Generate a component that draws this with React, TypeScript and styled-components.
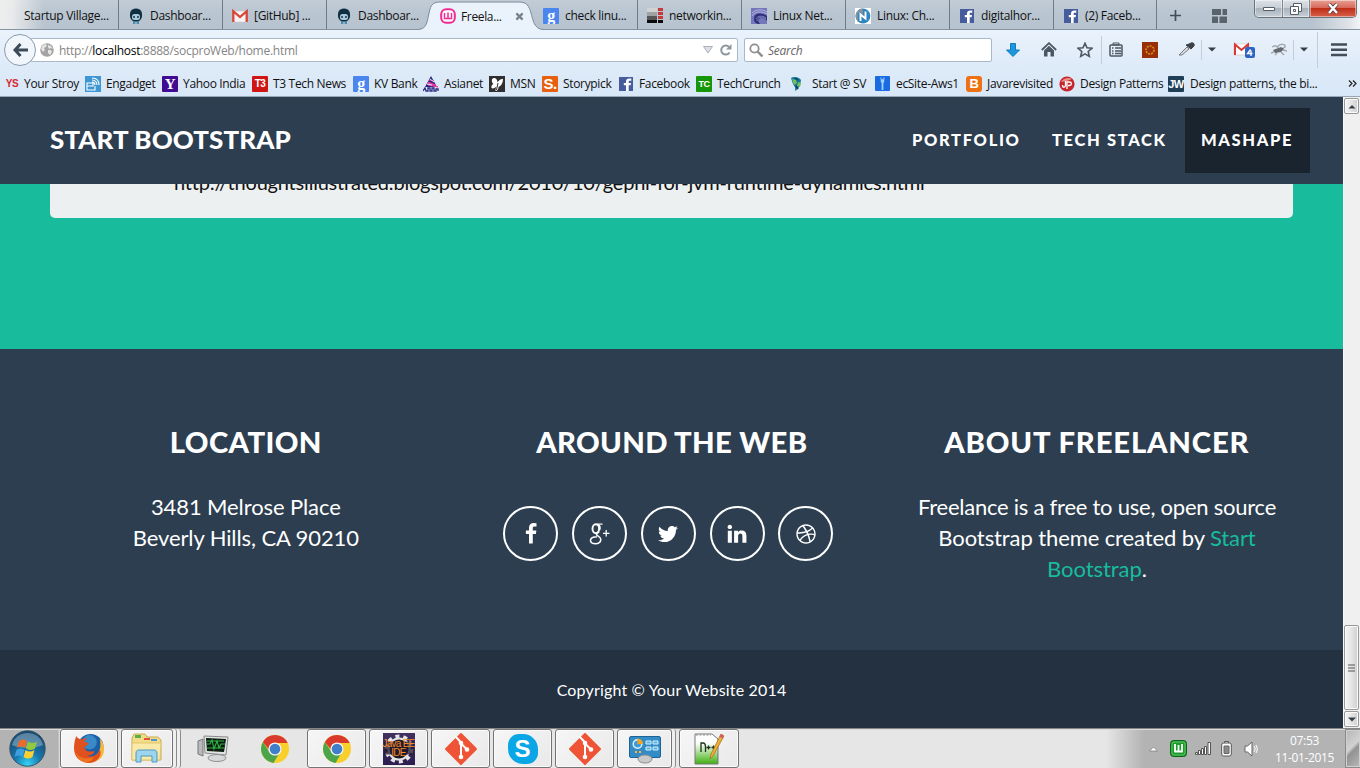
import React from "react";
import styled, { createGlobalStyle, css } from "styled-components";
import { FaTwitter, FaDribbble } from "react-icons/fa";

const ui = `"Segoe UI", "Open Sans", sans-serif`;

const GlobalStyle = createGlobalStyle`
  * { box-sizing: border-box; }
  body { margin: 0; overflow: hidden; background: #2c3e50; }
  svg { display: block; flex: none; }
`;

const Screen = styled.div`
  width: 1360px;
  height: 768px;
  display: flex;
  flex-direction: column;
  overflow: hidden;
  font-family: ${ui};
  font-size: 12px;
  color: #111;
  white-space: nowrap;
`;

/* ---------- tab strip ---------- */

const TabStrip = styled.div`
  height: 30px;
  flex: none;
  display: flex;
  align-items: stretch;
  border-bottom: 1px solid #8693a0;
  background:
    linear-gradient(90deg, #eeeeee 0, rgba(238, 238, 238, 0.9) 12px, rgba(238, 238, 238, 0) 44px),
    linear-gradient(270deg, #f2f4f6 0, rgba(238, 240, 242, 0.7) 12px, rgba(238, 238, 238, 0) 46px),
    linear-gradient(#c1ccd6, #b9c5d0 45%, #b7c3ce);
`;

const Tab = styled.div<{ $w: number; $line?: boolean }>`
  width: ${(p) => p.$w}px;
  padding: 2px 0 0 9px;
  display: flex;
  align-items: center;
  gap: 6px;
  flex: none;
  letter-spacing: -0.3px;
  ${(p) =>
    p.$line !== false &&
    css`
      background: linear-gradient(90deg, rgba(255, 255, 255, 0) 0, rgba(255, 255, 255, 0) calc(100% - 1px), #6f7c88 calc(100% - 1px));
    `}
`;

const ActiveTab = styled.div`
  width: 125px;
  margin: 0 -9px 0 -13px;
  height: 30px;
  flex: none;
  position: relative;
  z-index: 1;
  display: flex;
  align-items: center;
  padding: 2px 0 0 22px;
  gap: 5px;
  letter-spacing: -0.35px;
  > svg:first-child {
    position: absolute;
    left: 0;
    top: 0;
  }
  > * { position: relative; }
`;

const TabLabel = styled.span<{ $w?: number }>`
  width: ${(p) => (p.$w ? `${p.$w}px` : "auto")};
`;

const StripTools = styled.div`
  display: flex;
  align-items: center;
  gap: 31px;
  padding: 2px 0 0 13px;
  width: 97px;
`;

const WindowButtons = styled.div`
  display: flex;
  height: 18px;
  width: 103px;
  border: 1px solid #68737d;
  border-top: 0;
  border-radius: 0 0 5px 5px;
  overflow: hidden;
  background: linear-gradient(#dce2e8, #c6cdd4 48%, #a9b3bc 50%, #c8d0d7);
`;

const WindowButton = styled.div<{ $w: number; $close?: boolean }>`
  width: ${(p) => p.$w}px;
  display: flex;
  align-items: center;
  justify-content: center;
  border-right: ${(p) => (p.$close ? "0" : "1px solid #7d8790")};
  box-shadow: inset 0 0 0 1px rgba(255, 255, 255, 0.45);
  background: ${(p) => (p.$close ? "linear-gradient(#e9a093, #d7695a 46%, #c02e17 50%, #d8614a)" : "transparent")};
`;

/* ---------- address toolbar ---------- */

const Chrome = styled.div`
  height: 67px;
  flex: none;
  background: linear-gradient(#eaf3fc, #dfebf8 50%, #d8e7f7);
  border-bottom: 1px solid #98a6b5;
`;

const Toolbar = styled.div`
  height: 39px;
  display: flex;
  align-items: center;
  padding-left: 4px;
`;

const BackButton = styled.div`
  width: 32px;
  height: 32px;
  border-radius: 50%;
  border: 1px solid #8b9bad;
  background: #f1f6fc;
  display: flex;
  align-items: center;
  justify-content: center;
  z-index: 1;
  flex: none;
`;

const Field = styled.div<{ $w: number; $url?: boolean }>`
  width: ${(p) => p.$w}px;
  height: 24px;
  margin-left: ${(p) => (p.$url ? -6 : 6)}px;
  padding-left: ${(p) => (p.$url ? 9 : 4)}px;
  border: 1px solid #a9b9cc;
  border-radius: 2px;
  background: #fff;
  display: flex;
  align-items: center;
  flex: none;
`;

const Url = styled.div`
  flex: 1;
  padding: 2px 0 0 5px;
  color: #858585;
  letter-spacing: -0.27px;
  b { font-weight: 400; color: #000; }
`;

const SearchHint = styled.div`
  font-style: italic;
  color: #666;
  padding: 2px 0 0 5px;
  letter-spacing: -0.25px;
`;

const Tool = styled.div<{ $w: number }>`
  width: ${(p) => p.$w}px;
  height: 28px;
  display: flex;
  align-items: center;
  justify-content: center;
  flex: none;
`;

const Divider = styled.div<{ $h?: number }>`
  width: 1px;
  height: ${(p) => p.$h ?? 20}px;
  background: #c2cdd9;
  flex: none;
`;

const Bookmarks = styled.div`
  height: 28px;
  display: flex;
  align-items: center;
  padding: 1px 0 0 4px;
`;

const Bookmark = styled.div<{ $w: number; $gap?: number }>`
  width: ${(p) => p.$w}px;
  flex: none;
  display: flex;
  align-items: center;
  gap: ${(p) => p.$gap ?? 5}px;
  letter-spacing: -0.33px;
`;

const Favicon = styled.span<{ $bg?: string; $fg?: string; $size?: number; $serif?: boolean; $r?: number }>`
  width: 16px;
  height: 16px;
  flex: none;
  display: flex;
  align-items: center;
  justify-content: center;
  overflow: hidden;
  border-radius: ${(p) => p.$r ?? 1}px;
  background: ${(p) => p.$bg ?? "transparent"};
  color: ${(p) => p.$fg ?? "#fff"};
  font: bold ${(p) => p.$size ?? 12}px/16px ${(p) => (p.$serif ? `"Liberation Serif", serif` : `"Liberation Sans", sans-serif`)};
  letter-spacing: -0.5px;
`;

/* ---------- web page ---------- */

const Viewport = styled.div`
  height: 631px;
  flex: none;
  display: flex;
`;

const Page = styled.div`
  width: 1343px;
  display: flex;
  flex-direction: column;
  font-family: Lato, sans-serif;
  color: #fff;
`;

const SiteNav = styled.nav`
  height: 87px;
  flex: none;
  background: #2c3e50;
  padding: 0 33px 0 50px;
  display: flex;
  align-items: center;
  font-weight: 900;
  z-index: 1;
`;

const Brand = styled.div`
  flex: 1;
  font-size: 25px;
  letter-spacing: 0.1px;
  padding-bottom: 4px;
  transform: scaleX(1.037);
  transform-origin: left;
`;

const NavLink = styled.div<{ $w: number; $active?: boolean }>`
  width: ${(p) => p.$w}px;
  height: 65px;
  padding: 0 0 1px 16px;
  display: flex;
  align-items: center;
  font-size: 16.5px;
  letter-spacing: 1.65px;
  background: ${(p) => (p.$active ? "#1a242f" : "transparent")};
`;

const GreenSection = styled.section`
  height: 165px;
  flex: none;
  background: #18bc9c;
  padding: 0 50px;
`;

const Panel = styled.div`
  height: 34px;
  overflow: hidden;
  background: #ecf0f1;
  border-radius: 0 0 5px 5px;
  color: #111;
  padding-left: 124px;
  font-size: 20px;
  line-height: 28px;
  letter-spacing: -0.2px;
  > div { margin-top: -16px; }
`;

const Footer = styled.footer`
  height: 301px;
  flex: none;
  background: #2c3e50;
  display: flex;
  padding: 77px 33px 0;
  text-align: center;
`;

const FooterCol = styled.div`
  width: 425.6px;
  flex: none;
  font-size: 22px;
  line-height: 31px;
`;

const FooterLine = styled.div<{ $track: number }>`
  letter-spacing: ${(p) => p.$track}px;
`;

const FooterTitle = styled.h3<{ $track: number }>`
  margin: 0 0 33px;
  font-size: 28px;
  line-height: 32px;
  font-weight: 900;
  letter-spacing: ${(p) => p.$track}px;
  transform: scaleX(1.045);
`;

const Accent = styled.span`
  color: #18bc9c;
`;

const Socials = styled.div`
  display: flex;
  justify-content: center;
  gap: 13.8px;
  padding: 15px 6px 0 0;
`;

const Social = styled.div`
  width: 55px;
  height: 55px;
  border: 2px solid #fff;
  border-radius: 50%;
  display: flex;
  align-items: center;
  justify-content: center;
`;

const Copyright = styled.div`
  height: 78px;
  background: #233140;
  text-align: center;
  font-size: 16px;
  line-height: 80px;
  letter-spacing: 0.17px;
`;

const Scrollbar = styled.div`
  width: 17px;
  background: #f0f0f0;
  border-left: 1px solid #fafafa;
  display: flex;
  flex-direction: column;
  padding: 1px 1px 1px 0;
`;

const ScrollButton = styled.div<{ $h?: number; $mb?: number }>`
  height: ${(p) => p.$h ?? 16}px;
  flex: none;
  margin-bottom: ${(p) => p.$mb ?? 0}px;
  border: 1px solid #989898;
  border-radius: 2px;
  background: linear-gradient(90deg, #f6f6f6, #e4e4e4 50%, #cfcfcf);
  box-shadow: inset 0 0 0 1px #fafafa;
  display: flex;
  align-items: center;
  justify-content: center;
`;

/* ---------- taskbar ---------- */

const Taskbar = styled.div`
  height: 40px;
  flex: none;
  border-top: 1px solid #85868a;
  background: linear-gradient(90deg, #b3b3b3 0, #b3b3b3 58px, #e6e6e6 60px, #e6e6e6 1106px, #b3b3b3 1144px);
  box-shadow: inset 0 1px 0 #dcdcdc;
  display: flex;
  align-items: stretch;
`;

const TaskItem = styled.div<{ $w: number; $gap?: number; $button?: boolean }>`
  width: ${(p) => p.$w}px;
  margin: 0 ${(p) => p.$gap ?? 3}px 0 0;
  flex: none;
  display: flex;
  align-items: center;
  justify-content: center;
  ${(p) =>
    p.$button &&
    css`
      border: 1px solid #737373;
      border-radius: 3px;
      background: linear-gradient(135deg, #f6f6f6, #e9e9e9);
      box-shadow: inset 0 0 0 1px #fbfbfb;
    `}
`;

const StackEdge = styled.div<{ $gap?: number }>`
  width: 4px;
  margin-right: ${(p) => p.$gap ?? 0}px;
  border-right: 1px solid #8a8a8a;
  border-radius: 0 3px 3px 0;
  background: #efefef;
  flex: none;
`;

const Tray = styled.div`
  margin-left: auto;
  display: flex;
  align-items: center;
`;

const TrayIcon = styled.div<{ $w: number }>`
  width: ${(p) => p.$w}px;
  display: flex;
  justify-content: center;
`;

const Clock = styled.div`
  width: 81px;
  text-align: center;
  color: #fff;
  line-height: 17px;
  letter-spacing: -0.35px;
`;

const ShowDesktop = styled.div`
  width: 15px;
  height: 39px;
  border: 1px solid #8a8a8a;
  border-right: 0;
  background: linear-gradient(135deg, #b5b5b5, #d2d2d2 45%, #929292 55%, #b8b8b8);
  box-shadow: inset 0 0 0 1px #d0d0d0;
`;

/* ---------- small drawings ---------- */

const Octocat = () => (
  <svg width="16" height="16" viewBox="0 0 16 16">
    <path d="M5 11h6v5H5z" fill="#7fb4d2" />
    <rect x="2" y="0.500" width="12" height="13" rx="5.500" fill="#10303f" />
    <rect x="4" y="6" width="8" height="6" rx="2.500" fill="#a9c9dc" />
    <path d="M6 8v2M10 8v2" stroke="#10303f" strokeWidth="1.400" />
    <path d="M6 13v3M10 13v3" stroke="#2f6482" />
  </svg>
);

const Gmail = () => (
  <svg width="16" height="16" viewBox="0 0 16 16">
    <path d="M1 3h14v11H1z" fill="#f7f3f2" stroke="#cfc4c2" strokeWidth=".5" />
    <path d="M1.300 14V3.200L8 9l6.700-5.800V14" fill="none" stroke="#d8463a" strokeWidth="2.300" />
  </svg>
);

const Wamp = () => (
  <svg width="16" height="16" viewBox="0 0 16 16">
    <rect x="1.200" y="1.200" width="13.600" height="13.600" rx="5" fill="#fff" stroke="#ee2a93" strokeWidth="2" />
    <path d="M4.500 5v5.500h7V5M8 4.500v5.500" fill="none" stroke="#ee2a93" strokeWidth="1.500" />
  </svg>
);

const BlockBars = () => (
  <svg width="16" height="16" viewBox="0 0 16 16">
    <path d="M0 0h10v4H0z" fill="#d0d2d3" />
    <path d="M0 4h10v4H0z" fill="#a1a1a1" />
    <path d="M0 8h10v4H0z" fill="#555" />
    <path d="M0 12h10v3H0zM11 12h5v3h-5z" fill="#0b0b0b" />
    <path d="M11 0h5v3h-5zM11 4h5v3h-5zM11 8h5v3h-5z" fill="#c8373c" />
  </svg>
);

const Swirl = () => (
  <svg width="16" height="16" viewBox="0 0 16 16">
    <path d="M0 0h16v16H0z" fill="#7577bd" />
    <path d="M1 5c4-4 11-4 15-1M1 8C4 3 11 3 16 6" fill="none" stroke="#b4b6e0" />
    <path d="M3 11c0-6 7-7 13-3v5c-2-3-6-4-8-2s0 3 1 5C5 16 3 14 3 11z" fill="#2c3179" />
    <path d="M6 13c0-4 5-5 9-2M5 11c1-3 6-4 10-1" fill="none" stroke="#8d90cc" strokeWidth=".8" />
  </svg>
);

const NBadge = () => (
  <svg width="16" height="16" viewBox="0 0 16 16">
    <path d="M0 0h16v16H0z" fill="#fff" />
    <circle cx="8" cy="8" r="7.400" fill="#2f86bf" />
    <path d="M8 .6A7.400 7.400 0 003 13.500V5l5 2z" fill="#7f929e" />
    <path d="M5.500 13V6.500l5 4V3.500" fill="none" stroke="#fff" strokeWidth="1.900" />
  </svg>
);

const Engadget = () => (
  <svg width="16" height="16" viewBox="0 0 16 16">
    <path d="M0 0h16v16H0z" fill="#3d97d3" />
    <path d="M2 7h6v3H2zM2 10v4h8v-4M7 6c2 0 3 1 3 3M7 4c3 0 5 2 5 5M7 2c5 0 7 3 7 7" fill="none" stroke="#fff" strokeWidth="1.100" />
  </svg>
);

const Asianet = () => (
  <svg width="16" height="16" viewBox="0 0 16 16">
    <path d="M8 0l6 11H2z" fill="#272780" />
    <path d="M5 6l8 3H9l6 2-10-2zM6 4l5 1" fill="#e73a9d" stroke="#e73a9d" />
    <path d="M4 8l5 1M7 3l4 3" stroke="#dde9f6" />
    <path d="M0 15l2-3 1 3h2v-3h2v3h2v-3h2v3h2v-2h2v2" fill="none" stroke="#2c2c80" strokeWidth="1.300" />
  </svg>
);

const Butterfly = () => (
  <svg width="16" height="16" viewBox="0 0 16 16">
    <path d="M0 0h16v16H0z" fill="#303030" />
    <path d="M5 2c2.500 0 3.500 2.500 3.500 4.500C10 4 12 2.500 14 3c0 4-1.500 6.500-4.500 8 0 2-1 4-3 4 0-2 .3-3 1-4.500C6 12 4 13 2.500 12 2 10 3 8.500 4.500 8 2 6 2.500 2 5 2z" fill="#fff" />
    <path d="M7.500 14L9 7" stroke="#303030" />
  </svg>
);

const Globule = () => (
  <svg width="16" height="16" viewBox="0 0 16 16">
    <path d="M2 2c3-2 8-1 10 2l-1 5c-1 3-3 5-5 6 1-4-1-5-2-7z" fill="#10759c" />
    <path d="M3 3l4 1 1 3-3 2zM9 6l3 1-1 4-3-1z" fill="#78c05a" />
    <path d="M6 2l3 2M7 10l2 3" stroke="#073f66" strokeWidth="1.500" />
  </svg>
);

const Figure = () => (
  <svg width="16" height="16" viewBox="0 0 16 16">
    <rect width="15" height="15" rx="1" fill="#1b6be0" />
    <path d="M6 1.500v2.200M9 1.500v2.200" stroke="#9cd2ff" />
    <circle cx="7.500" cy="5" r="1.900" fill="#9cd2ff" />
    <path d="M7.500 6v8" stroke="#9cd2ff" fill="none" strokeWidth="1.800" />
  </svg>
);

const RedBall = () => (
  <svg width="16" height="16" viewBox="0 0 16 16">
    <circle cx="8" cy="8" r="7.600" fill="#c6262c" />
    <path d="M2 6c2-4 8-5 11-3L8 5z" fill="#ea8f8c" />
    <path d="M3.500 9c0 3 3 3 3 0V5M8 13V6h2.500c2.500 0 2.500 3.500 0 3.500H9" fill="none" stroke="#fff" strokeWidth="1.300" />
  </svg>
);

const Globe = () => (
  <svg width="14" height="14" viewBox="0 0 14 14">
    <circle cx="7" cy="7" r="6.800" fill="#a3a3a3" />
    <path d="M2 3l3-2 2 1-1 2-2 1 1 2-2 2-2-3zM8 2l3 1 2 3-2-1-2 1-1-2zM8 7l3 0 1 2-2 3-2-2z" fill="#e4e4e4" />
  </svg>
);

const FirefoxLogo = () => (
  <svg width="31" height="31" viewBox="0 0 30 30">
    <circle cx="16" cy="13.500" r="12.500" fill="#1c5fa8" />
    <circle cx="15" cy="9" r="7" fill="#4fa7dd" opacity=".6" />
    <path d="M25 5c6 7 5 17-1 21-7 5-16 3-20-3 6 3 14 3 18-2 4-4 4-10 3-16z" fill="#f6b83a" />
    <path d="M2 3c1 2 3 3 5 3 2-1 4-1 6-1-2 1-3 2-3 4 2 0 4 0 4 1 0 2-3 2-4 4 1 2 2 4 5 4 2 0 3-1 5 0-1 3-5 4-7 4 5 2 10-1 12-6 3 6-3 13-10 13C7 29 0 24 0 15 0 10 1 7 2 3z" fill="#e2501d" />
    <path d="M1 17c3 8 11 9 18 6-1 4-5 6-9 5-5-1-8-6-9-11z" fill="#ee7420" />
  </svg>
);

const Folder = () => (
  <svg width="34" height="32" viewBox="0 0 34 32">
    <path d="M2 27V5l2-4h11l2 3h11l3 3v20z" fill="#f3dc86" stroke="#c9a94e" />
    <path d="M5 2h6v3H5z" fill="#58b04b" />
    <path d="M14 5h6v2h-6z" fill="#e0523c" />
    <path d="M21 6h6v2h-6z" fill="#4d96d1" />
    <path d="M2 10h29l-1 17H2z" fill="#f9eaa9" stroke="#dfc56c" />
    <path d="M6 29V20c0-2 1-3 3-3h15c2 0 3 1 3 3v9h-5v-6H11v6z" fill="#9ed4ee" stroke="#4d99bf" />
  </svg>
);

const Monitor = () => (
  <svg width="32" height="28" viewBox="0 0 32 28">
    <path d="M1 6l5-2v17l-5-2z" fill="#b7b9ba" stroke="#77797a" />
    <path d="M7 1l24 1-2 18-21-2z" fill="#e2e2e2" stroke="#888" />
    <path d="M9 3l20 1-2 13-17-1z" fill="#0c1c10" />
    <path d="M10 9h3l2-4 2 9 3-8 2 7 2-4h4M10 6h17M10 13h17" fill="none" stroke="#30b545" strokeWidth="1.100" />
    <ellipse cx="20" cy="23" rx="9" ry="3.500" fill="#d5d7d9" stroke="#8d8f91" />
  </svg>
);

const ChromeLogo = () => (
  <svg width="30" height="30" viewBox="0 0 30 30">
    <circle cx="15" cy="15" r="14" fill="#f8cf2b" />
    <path d="M2.900 8A14 14 0 0127.700 9H15l-6 6.500z" fill="#d93a2c" />
    <path d="M2.900 8A14 14 0 0013.500 28.900L20 18l-10.500 0z" fill="#4ca54a" />
    <circle cx="15" cy="15" r="6.600" fill="#f4f4f4" />
    <circle cx="15" cy="15" r="5.300" fill="#3f7fc9" />
  </svg>
);

const GitLogo = () => (
  <svg width="32" height="32" viewBox="0 0 32 32">
    <path d="M16 1L31 16 16 31 1 16z" fill="#ef5436" stroke="#ef5436" strokeWidth="2" strokeLinejoin="round" />
    <path d="M10.500 3.500l5.500 6v15M16 10.500l6 6" fill="none" stroke="#fff" strokeWidth="2" />
    <circle cx="16" cy="10" r="2.300" fill="#fff" />
    <circle cx="22" cy="16.500" r="2.300" fill="#fff" />
    <circle cx="16" cy="24" r="2.300" fill="#fff" />
  </svg>
);

const SkypeMark = styled.div`
  width: 30px;
  height: 30px;
  border-radius: 11px 15px 11px 15px;
  background: #0aa6e5;
  color: #fff;
  text-align: center;
  font: bold 24px/30px "Liberation Sans", sans-serif;
`;

const JavaMark = styled.div`
  width: 32px;
  height: 32px;
  background: linear-gradient(#41305f, #2c1e50);
  display: grid;
  place-items: center;
  > * { grid-area: 1 / 1; }
`;

const JavaText = styled.div`
  color: #f58a2a;
  font: 10px/8.500px "Liberation Sans", sans-serif;
  text-align: center;
  letter-spacing: -0.75px;
  z-index: 1;
  white-space: pre;
`;

const Gear = () => (
  <svg width="30" height="30" viewBox="0 0 30 30">
    <circle cx="15" cy="15" r="12.500" fill="none" stroke="#e4e4e4" strokeWidth="4" strokeDasharray="4 3.850" />
    <circle cx="15" cy="15" r="10.500" fill="#1c1a1f" stroke="#e4e4e4" strokeWidth="2" />
    <path d="M0 7.500h30v13H0z" fill="#241a30" opacity=".75" />
  </svg>
);

const ControlPanel = () => (
  <svg width="32" height="30" viewBox="0 0 32 30">
    <rect x=".5" y="2.500" width="31" height="21" rx="1.500" fill="#338cc6" stroke="#1e6396" />
    <circle cx="8.500" cy="10" r="4.300" fill="#3e9dd8" stroke="#dff2fc" strokeWidth="1.400" />
    <path d="M8.500 10V4.500a5.500 5.500 0 015.500 5.500z" fill="#f5a223" />
    <path d="M17 7h5v3h-5zM24 7h5v3h-5zM17 13h5v3h-5zM24 13h5v3h-5z" fill="#57b5e3" stroke="#d4f0fb" />
    <path d="M6 18h2M10 18h2" stroke="#ffb63e" strokeWidth="2" />
    <ellipse cx="16" cy="25" rx="7" ry="4" fill="#c7c9ca" stroke="#8b8d8e" />
  </svg>
);

const Notepad = () => (
  <svg width="30" height="32" viewBox="0 0 30 32">
    <defs>
      <linearGradient id="np" x1="0" y1="0" x2="0" y2="1">
        <stop offset=".3" stopColor="#fff" />
        <stop offset="1" stopColor="#3fb010" />
      </linearGradient>
    </defs>
    <path d="M1 1h17l6 5v25H1z" fill="url(#np)" stroke="#77797a" />
    <path d="M2 2h15" stroke="#8d8d8d" strokeDasharray="2 1.500" />
    <path d="M7 19v-9h2c2 0 2.500 1 2.500 4v5M12.500 14.500h4M14.500 12.500v4M17.500 14.500h4M19.500 12.500v4" fill="none" stroke="#19331a" strokeWidth="1.300" />
    <path d="M27 1l3 2-11 20-3 3 1-5z" fill="#eeae36" stroke="#a06d15" strokeWidth=".7" />
    <path d="M27 1l3 2-1.500 2.500-3-2z" fill="#d45a66" />
  </svg>
);

const StartOrb = () => (
  <svg width="37" height="37" viewBox="0 0 37 37">
    <defs>
      <radialGradient id="orb" cx=".5" cy=".95" r=".85">
        <stop offset="0" stopColor="#36d5f7" />
        <stop offset=".45" stopColor="#1876ad" />
        <stop offset="1" stopColor="#17486f" />
      </radialGradient>
    </defs>
    <circle cx="18.500" cy="18.500" r="17.700" fill="url(#orb)" stroke="#345569" />
    <path d="M3 15C5 7 11 3 18.500 3S32 7 34 15c-8 4-23 4-31 0z" fill="#b7d3e2" opacity=".42" />
    <path d="M10 11c3-2 5-2 8 0l-2 7c-3-2-5-2-8 0z" fill="#ec6a2b" />
    <path d="M19 11.500c3 2 6 2 9 0l-2 7c-3 2-6 2-9 0z" fill="#94c93d" />
    <path d="M7.500 20c3-2 5-2 8 0l-2 7c-3-2-5-2-8 0z" fill="#3e9fe0" />
    <path d="M16.500 20c3 2 6 2 9 0l-2 7c-3 2-6 2-9 0z" fill="#fbd034" />
  </svg>
);

const Caret = ({ up = false }: { up?: boolean }) => (
  <svg width="8" height="5" viewBox="0 0 8 5">
    <path d={up ? "M0.500 4.500L4 1l3.500 3.500z" : "M0 .5h8l-4 4z"} fill="#363e45" />
  </svg>
);

const FacebookGlyph = () => (
  <svg width="22" height="22" viewBox="0 0 1792 1792">
    <path fill="#fff" d="M1343 12v264h-157q-86 0-116 36t-30 108v189h293l-39 296h-254v759h-306v-759h-255v-296h255v-218q0-186 104-288.500t277-102.500q147 0 228 12z" />
  </svg>
);

const LinkedinGlyph = () => (
  <svg width="22" height="22" viewBox="0 0 1792 1792">
    <path fill="#fff" d="M477 625v991h-330v-991h330zm21-306q1 73-50.500 122t-135.500 49h-2q-82 0-132-49t-50-122q0-74 51.500-122.500t134.500-48.500 133 48.500 51 122.500zm1166 729v568h-329v-530q0-105-40.500-164.500t-126.500-59.500q-63 0-105.500 34.500t-64.500 85.500q-11 30-11 81v553h-329q2-399 2-647t-1-296l-1-48h329v144h-2q20-32 41-56t56.500-52 87-43.500 114.500-15.500q171 0 275 113.500t104 332.500z" />
  </svg>
);

const GooglePlus = () => (
  <svg width="21" height="22" viewBox="0 0 21 22" fill="none" stroke="#fff">
    <ellipse cx="6.800" cy="5.700" rx="3.300" ry="4.400" strokeWidth="1.900" />
    <path d="M13.500 1.100H7.500" strokeWidth="1.200" />
    <path d="M9.500 1.500c1.500 1.200 1.800 3.500 1.100 5.500" strokeWidth="1.500" />
    <path d="M10 8.500c-.8 1.200-2.600 1.700-2.600 2.800 0 1.800 4.400 2.200 4.400 5.200 0 2.600-2.400 4.200-5.400 4.200-2.900 0-4.900-1.200-4.900-3.300 0-2.500 3-3.500 6.500-3.600" strokeWidth="1.600" />
    <path d="M14 10.300h6.500M17.200 7v6.600" strokeWidth="1.300" />
  </svg>
);

const googleFav = <Favicon $bg="#4a86ee" $serif $size={16}>g</Favicon>;
const fbFav = (
  <Favicon>
    <svg width="14" height="14" viewBox="0 0 14 14">
      <path d="M0 0h14v14H0z" fill="#455d9c" />
      <path d="M7 14V8.300H4.800V6H7V4.500c0-2 1.200-3 3.300-3h2v2.200H11c-1 0-1.300.4-1.300 1.200V6H12l-.4 2.300H9.700V14z" fill="#fff" />
    </svg>
  </Favicon>
);

const tabsBefore = [
  { label: "Dashboar...", icon: <Octocat />, w: 104 },
  { label: "[GitHub] ...", icon: <Gmail />, w: 104 },
  { label: "Dashboar...", icon: <Octocat />, w: 104, line: false },
];

const tabsAfter = [
  { label: "check linu...", icon: googleFav, w: 104 },
  { label: "networkin...", icon: <BlockBars />, w: 104 },
  { label: "Linux Net...", icon: <Swirl />, w: 104 },
  { label: "Linux: Ch...", icon: <NBadge />, w: 104 },
  { label: "digitalhor...", icon: fbFav, w: 104 },
  { label: "(2) Faceb...", icon: fbFav, w: 103 },
];

const bookmarks = [
  { label: "Your Stroy", w: 81, gap: 4, icon: <Favicon $fg="#d8262f" $size={10}>YS</Favicon> },
  { label: "Engadget", w: 77, icon: <Engadget /> },
  { label: "Yahoo India", w: 90, icon: <Favicon $bg="#400a93" $serif $size={15}>Y</Favicon> },
  { label: "T3 Tech News", w: 101, icon: <Favicon $bg="#d01515" $size={10}>T3</Favicon> },
  { label: "KV Bank", w: 70, icon: googleFav },
  { label: "Asianet", w: 66, icon: <Asianet /> },
  { label: "MSN", w: 53, icon: <Butterfly /> },
  { label: "Storypick", w: 76, icon: <Favicon $bg="#e7600f" $size={15}>S.</Favicon> },
  { label: "Facebook", w: 78, icon: fbFav },
  { label: "TechCrunch", w: 93, icon: <Favicon $bg="#159709" $size={9}>TC</Favicon> },
  { label: "Start @ SV", w: 86, gap: 7, icon: <Globule /> },
  { label: "ecSite-Aws1", w: 91, icon: <Figure /> },
  { label: "Javarevisited", w: 93, icon: <Favicon $bg="#ee7213" $size={13} $r={3}>B</Favicon> },
  { label: "Design Patterns", w: 109, icon: <RedBall /> },
  { label: "Design patterns, the bi...", w: 180, gap: 6, icon: <Favicon $bg="#203f56" $size={11}>JW</Favicon> },
];

export default function App() {
  return (
    <Screen>
      <GlobalStyle />
      <TabStrip>
        <Tab $w={119}>
          <TabLabel $w={9} />
          <TabLabel>Startup Village...</TabLabel>
        </Tab>
        {tabsBefore.map((t, i) => (
          <Tab key={i} $w={t.w} $line={t.line}>{t.icon}<TabLabel>{t.label}</TabLabel></Tab>
        ))}
        <ActiveTab>
          <svg width="125" height="30" viewBox="0 0 125 30">
            <path d="M0 29.500C9 29 9 22 11 13S15 2 23 2h78c8 0 10 4 12 11s3 16 12 16.500V30H0z" fill="#eaf3fc" />
            <path d="M0 29.500C9 29 9 22 11 13S15 2 23 2h78c8 0 10 4 12 11s3 16 12 16.500" fill="none" stroke="#7e8b98" />
          </svg>
          <Wamp />
          <TabLabel $w={49}>Freela...</TabLabel>
          <svg width="9" height="9" viewBox="0 0 10 10">
            <path d="M1.500 1.500l7 7M8.500 1.500l-7 7" stroke="#77818b" strokeWidth="2.500" />
          </svg>
        </ActiveTab>
        {tabsAfter.map((t, i) => (
          <Tab key={i} $w={t.w}>{t.icon}<TabLabel>{t.label}</TabLabel></Tab>
        ))}
        <StripTools>
          <svg width="11" height="11" viewBox="0 0 11 11"><path d="M0 5.500h11M5.500 0v11" stroke="#424d57" strokeWidth="1.700" /></svg>
          <svg width="15" height="14" viewBox="0 0 15 14"><path d="M0 0h9v6H0zM10.500 0H15v6h-4.500zM0 7.500h6V14H0zM7.500 7.500H15V14H7.500z" fill="#59636c" /></svg>
        </StripTools>
        <WindowButtons>
          <WindowButton $w={28}><svg width="12" height="6" viewBox="0 0 12 6"><path d="M.5 1.500h11v3H.5z" fill="#fff" stroke="#555e66" /></svg></WindowButton>
          <WindowButton $w={27}>
            <svg width="12" height="12" viewBox="0 0 12 12" fill="none" stroke="#555e66"><path d="M3.500.5h8v8h-8z" fill="#fff" /><path d="M.5 3.500h8v8h-8z" fill="#fff" /><path d="M3.500 6.500h2v2h-2z" /></svg>
          </WindowButton>
          <WindowButton $w={46} $close>
            <svg width="14" height="11" viewBox="0 0 14 11"><path d="M3 1l8 9M11 1l-8 9" stroke="#5a3a3a" strokeWidth="4" /><path d="M3 1l8 9M11 1l-8 9" stroke="#fff" strokeWidth="2.500" /></svg>
          </WindowButton>
        </WindowButtons>
      </TabStrip>

      <Chrome>
        <Toolbar>
          <BackButton>
            <svg width="15" height="14" viewBox="0 0 15 14"><path d="M7.500 1L2 7l5.500 6M2 7h13" fill="none" stroke="#3d4a57" strokeWidth="3" /></svg>
          </BackButton>
          <Field $w={708} $url>
            <Globe />
            <Url>http://<b>localhost</b>:8888/socproWeb/home.html</Url>
            <Tool $w={12}><svg width="10" height="8" viewBox="0 0 10 8"><path d="M.5.5h9L5 7z" fill="#dde0e4" stroke="#aab0b6" /></svg></Tool>
            <Tool $w={23}><svg width="12" height="12" viewBox="0 0 12 12"><path d="M9.500 8.500A4.500 4.500 0 119 3" fill="none" stroke="#8d969f" strokeWidth="2" /><path d="M11.500 0v5.500H6z" fill="#8d969f" /></svg></Tool>
          </Field>
          <Field $w={248}>
            <svg width="14" height="14" viewBox="0 0 14 14"><circle cx="5.500" cy="5.500" r="4.200" fill="none" stroke="#8e8e8e" strokeWidth="1.800" /><path d="M8.500 8.500l5 5" stroke="#8e8e8e" strokeWidth="2.400" /></svg>
            <SearchHint>Search</SearchHint>
          </Field>
          <Tool $w={42}><svg width="14" height="14" viewBox="0 0 14 14"><path d="M4.500.5h5V7h4L7 13.500.5 7h4z" fill="#1a97dd" stroke="#137bb8" /></svg></Tool>
          <Tool $w={30}><svg width="16" height="15" viewBox="0 0 16 15"><path d="M.8 8L8 1.200 15.200 8" fill="none" stroke="#4b5763" strokeWidth="1.800" /><path d="M3 8.500l5-4.700 5 4.700V14.500H9.500V10h-3v4.500H3z" fill="#4b5763" /></svg></Tool>
          <Tool $w={5} />
          <Tool $w={32}><svg width="16" height="16" viewBox="0 0 16 16"><path d="M8 1.300l2 4.500 4.900.5-3.700 3.200 1.100 4.900L8 11.900l-4.300 2.500 1.100-4.900L1.100 6.300 6 5.800z" fill="none" stroke="#4b5763" strokeWidth="1.600" /></svg></Tool>
          <Divider $h={28} />
          <Tool $w={27}><svg width="14" height="15" viewBox="0 0 14 15"><rect x="1" y="3" width="12" height="11" rx="1" fill="none" stroke="#4b5763" strokeWidth="1.500" /><path d="M4 1h6v2H4z" stroke="#4b5763" fill="none" /><path d="M3 6h1.500M6 6h6M3 9h1.500M6 9h6M3 11.500h1.500M6 11.500h6" stroke="#4b5763" strokeWidth="1.300" /></svg></Tool>
          <Tool $w={42}><svg width="16" height="16" viewBox="0 0 16 16"><path d="M0 0h16v16H0z" fill="#973008" /><circle cx="8" cy="8" r="4" fill="none" stroke="#d88b14" strokeWidth="1.700" strokeDasharray="2 1" /></svg></Tool>
          <Tool $w={30}><svg width="18" height="15" viewBox="0 0 18 15"><path d="M2 13l8-8 2 2-7 6z" fill="#d9dcdd" stroke="#757b80" /><path d="M9 3l5 4 3-3c1-2-1-4-3-3l-2 1z" fill="#3d4247" stroke="#3d4247" /></svg></Tool>
          <Divider />
          <Tool $w={19}><Caret /></Tool>
          <Tool $w={45}>
            <svg width="22" height="17" viewBox="0 0 22 17">
              <path d="M1 3h15v11H1z" fill="#fff" stroke="#d9aaa7" strokeWidth=".5" />
              <path d="M2 14V3.500L8.500 9 15 3.500V8" fill="none" stroke="#d83b36" strokeWidth="2" />
              <rect x="12" y="6" width="10" height="11" rx="2" fill="#2d65c5" />
              <path d="M17.500 8.500l-3 4h5M18 9.500v5.500" fill="none" stroke="#fff" strokeWidth="1.300" />
            </svg>
          </Tool>
          <Tool $w={25}><svg width="16" height="14" viewBox="0 0 16 14"><path d="M1 4c3-2 5-1 6 1M6 4c4-4 9-3 8 0-2 2-4 2-6 3M3 9l-3 1M6 10l-2 2M10 9l3 3M12 7l4 1" fill="none" stroke="#a3a8ad" strokeWidth="1.500" /><path d="M2 7l8-3 3 2-3 3-6 1z" fill="#64696e" /></svg></Tool>
          <Tool $w={2} /><Divider />
          <Tool $w={19}><Caret /></Tool>
          <Tool $w={4} /><Divider $h={36} />
          <Tool $w={42}><svg width="16" height="14" viewBox="0 0 16 14"><path d="M0 1.500h16M0 6.800h16M0 12h16" stroke="#424d58" strokeWidth="2.400" /></svg></Tool>
        </Toolbar>
        <Bookmarks>
          {bookmarks.map((b) => (
            <Bookmark key={b.label} $w={b.w} $gap={b.gap}>{b.icon}<span>{b.label}</span></Bookmark>
          ))}
          <svg width="9" height="7" viewBox="0 0 9 7"><path d="M1 .5l3 3-3 3M5 .5l3 3-3 3" fill="none" stroke="#222" strokeWidth="1.200" /></svg>
        </Bookmarks>
      </Chrome>

      <Viewport>
        <Page>
          <SiteNav>
            <Brand>START BOOTSTRAP</Brand>
            <NavLink $w={140}>PORTFOLIO</NavLink>
            <NavLink $w={149}>TECH STACK</NavLink>
            <NavLink $w={125} $active>MASHAPE</NavLink>
          </SiteNav>
          <GreenSection>
            <Panel><div>http://thoughtsillustrated.blogspot.com/2010/10/gephi-for-jvm-runtime-dynamics.html</div></Panel>
          </GreenSection>
          <Footer>
            <FooterCol>
              <FooterTitle $track={0.35}>LOCATION</FooterTitle>
              <FooterLine $track={-0.1}>3481 Melrose Place</FooterLine>
              <FooterLine $track={-0.1}>Beverly Hills, CA 90210</FooterLine>
            </FooterCol>
            <FooterCol>
              <FooterTitle $track={0.3}>AROUND THE WEB</FooterTitle>
              <Socials>
                <Social><FacebookGlyph /></Social>
                <Social><GooglePlus /></Social>
                <Social><FaTwitter size={20} /></Social>
                <Social><LinkedinGlyph /></Social>
                <Social><FaDribbble size={20} /></Social>
              </Socials>
            </FooterCol>
            <FooterCol>
              <FooterTitle $track={0.8}>ABOUT FREELANCER</FooterTitle>
              <FooterLine $track={-0.24}>Freelance is a free to use, open source</FooterLine>
              <FooterLine $track={-0.1}>Bootstrap theme created by <Accent>Start</Accent></FooterLine>
              <FooterLine $track={-0.05}><Accent>Bootstrap</Accent>.</FooterLine>
            </FooterCol>
          </Footer>
          <Copyright>Copyright © Your Website 2014</Copyright>
        </Page>
        <Scrollbar>
          <ScrollButton $mb={511}><Caret up /></ScrollButton>
          <ScrollButton $h={85} $mb={1}>
            <svg width="8" height="8" viewBox="0 0 8 8"><path d="M0 1h7M0 4h7M0 7h7" stroke="#555" /></svg>
          </ScrollButton>
          <ScrollButton><Caret /></ScrollButton>
        </Scrollbar>
      </Viewport>

      <Taskbar>
        <TaskItem $w={54} $gap={6}><StartOrb /></TaskItem>
        <TaskItem $w={58} $button><FirefoxLogo /></TaskItem>
        <TaskItem $w={52} $gap={0} $button><Folder /></TaskItem>
        <StackEdge /><StackEdge />
        <TaskItem $w={64} $gap={0}><Monitor /></TaskItem>
        <TaskItem $w={59} $gap={3}><ChromeLogo /></TaskItem>
        <TaskItem $w={59} $button><ChromeLogo /></TaskItem>
        <TaskItem $w={59} $button>
          <JavaMark><Gear /><JavaText>{"Java EE\nIDE"}</JavaText></JavaMark>
        </TaskItem>
        <TaskItem $w={59} $button><GitLogo /></TaskItem>
        <TaskItem $w={59} $button><SkypeMark>S</SkypeMark></TaskItem>
        <TaskItem $w={59} $button><GitLogo /></TaskItem>
        <TaskItem $w={55} $gap={0} $button><ControlPanel /></TaskItem>
        <StackEdge $gap={3} />
        <TaskItem $w={60} $button><Notepad /></TaskItem>
        <Tray>
          <TrayIcon $w={24}><svg width="9" height="6" viewBox="0 0 9 6"><path d="M.5 5L4.500 1l4 4z" fill="#fff" stroke="#777" strokeWidth=".7" /></svg></TrayIcon>
          <TrayIcon $w={26}>
            <svg width="17" height="17" viewBox="0 0 17 17"><rect x=".5" y=".5" width="16" height="16" rx="3" fill="#1c9a2a" stroke="#0b6417" /><rect x="2" y="2" width="13" height="13" rx="2" fill="none" stroke="#7ed886" strokeWidth=".7" /><path d="M5 4v7.500h7V4M8.500 5v6" fill="none" stroke="#fff" strokeWidth="1.800" /></svg>
          </TrayIcon>
          <TrayIcon $w={24}>
            <svg width="17" height="13" viewBox="0 0 17 13"><path d="M.5 10.500h2v2h-2zM3.500 8.500h2v4h-2zM6.500 6.500h2v6h-2zM9.500 4.500h2v8h-2zM13 .5h2.500v12H13z" fill="#fff" stroke="#555" /></svg>
          </TrayIcon>
          <TrayIcon $w={23}>
            <svg width="11" height="16" viewBox="0 0 11 16"><path d="M3.500.5h4v2h-4z" fill="#fff" stroke="#555" /><rect x=".7" y="2" width="9.600" height="13" rx="2" fill="#fff" stroke="#555" /><path d="M3 5h5v7.500H3z" fill="#8a8a8a" stroke="#666" /></svg>
          </TrayIcon>
          <TrayIcon $w={26}>
            <svg width="14" height="16" viewBox="0 0 14 16"><path d="M1 5h2.500L8 1v14l-4.500-4H1z" fill="#fff" stroke="#666" /><path d="M10 5c1.500 2 1.500 4 0 6M12 4c1.600 2.500 1.600 5.500 0 8" fill="none" stroke="#fff" /></svg>
          </TrayIcon>
          <Clock>07:53<br />11-01-2015</Clock>
          <ShowDesktop />
        </Tray>
      </Taskbar>
    </Screen>
  );
}
